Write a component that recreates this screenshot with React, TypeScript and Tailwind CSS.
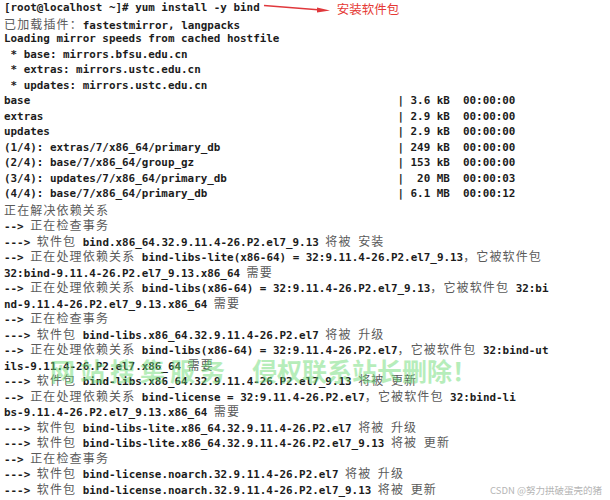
const lines: string[] = [
  "已加载插件：fastestmirror, langpacks",
  "Loading mirror speeds from cached hostfile",
  " * base: mirrors.bfsu.edu.cn",
  " * extras: mirrors.ustc.edu.cn",
  " * updates: mirrors.ustc.edu.cn",
  "base                                                        | 3.6 kB  00:00:00",
  "extras                                                      | 2.9 kB  00:00:00",
  "updates                                                     | 2.9 kB  00:00:00",
  "(1/4): extras/7/x86_64/primary_db                           | 249 kB  00:00:00",
  "(2/4): base/7/x86_64/group_gz                               | 153 kB  00:00:00",
  "(3/4): updates/7/x86_64/primary_db                          |  20 MB  00:00:03",
  "(4/4): base/7/x86_64/primary_db                             | 6.1 MB  00:00:12",
  "正在解决依赖关系",
  "--> 正在检查事务",
  "---> 软件包 bind.x86_64.32.9.11.4-26.P2.el7_9.13 将被 安装",
  "--> 正在处理依赖关系 bind-libs-lite(x86-64) = 32:9.11.4-26.P2.el7_9.13，它被软件包",
  "32:bind-9.11.4-26.P2.el7_9.13.x86_64 需要",
  "--> 正在处理依赖关系 bind-libs(x86-64) = 32:9.11.4-26.P2.el7_9.13，它被软件包 32:bi",
  "nd-9.11.4-26.P2.el7_9.13.x86_64 需要",
  "--> 正在检查事务",
  "---> 软件包 bind-libs.x86_64.32.9.11.4-26.P2.el7 将被 升级",
  "--> 正在处理依赖关系 bind-libs(x86-64) = 32:9.11.4-26.P2.el7，它被软件包 32:bind-ut",
  "ils-9.11.4-26.P2.el7.x86_64 需要",
  "---> 软件包 bind-libs.x86_64.32.9.11.4-26.P2.el7_9.13 将被 更新",
  "--> 正在处理依赖关系 bind-license = 32:9.11.4-26.P2.el7，它被软件包 32:bind-li",
  "bs-9.11.4-26.P2.el7_9.13.x86_64 需要",
  "---> 软件包 bind-libs-lite.x86_64.32.9.11.4-26.P2.el7 将被 升级",
  "---> 软件包 bind-libs-lite.x86_64.32.9.11.4-26.P2.el7_9.13 将被 更新",
  "--> 正在检查事务",
  "---> 软件包 bind-license.noarch.32.9.11.4-26.P2.el7 将被 升级",
  "---> 软件包 bind-license.noarch.32.9.11.4-26.P2.el7_9.13 将被 更新",
];

// split a line into latin / cjk runs so the cjk ones take two cells each
function Line({ text }: { text: string }) {
  const parts = text.split(/([\u3000-\u9fff\uff00-\uffef]+)/).filter(Boolean);
  return (
    <div className="h-[15.5px] whitespace-pre leading-[15.5px]">
      {parts.map((p, i) =>
        /[\u3000-\u9fff\uff00-\uffef]/.test(p) ? (
          <span
            key={i}
            className="text-[12px] font-normal tracking-[1.13px] text-[#5a5a5a] [font-family:'Noto_Sans_CJK_SC',sans-serif]"
          >
            {p}
          </span>
        ) : (
          <span key={i}>{p}</span>
        )
      )}
    </div>
  );
}

export default function App() {
  return (
    <div className="relative h-[500px] w-[610px] overflow-hidden bg-white">
      <div className="px-[4px] font-['DejaVu_Sans_Mono',monospace] text-[10.9px] font-semibold text-[#1c1c1c]">
        {/* command line + red annotation */}
        <div className="flex h-[15.5px] items-center whitespace-pre leading-[15.5px]">
          <span>[root@localhost ~]# yum install -y bind</span>
          <svg className="ml-[3px] mt-[2px] shrink-0" width="70" height="14" viewBox="0 0 70 14">
            <path d="M1 3.5 L58 8" stroke="#e0383c" strokeWidth="1.3" fill="none" />
            <polygon points="54,5.5 67,8.5 54,10.5" fill="#e0383c" />
          </svg>
          <span className="ml-[4px] mt-[2px] text-[12.5px] font-normal text-[#e53935] [font-family:'Noto_Sans_CJK_SC',sans-serif]">
            安装软件包
          </span>
        </div>
        {lines.map((l, i) => (
          <Line key={i} text={l} />
        ))}
      </div>

      {/* green watermark over the log */}
      <div className="pointer-events-none absolute left-[50px] top-[356px] flex gap-[22px] text-[25px] font-bold leading-[28px] text-[#6fdc78] opacity-50 [font-family:'Noto_Sans_CJK_SC',sans-serif]">
        <span className="tracking-[5px]">网站搜集服务</span>
        <span>侵权联系站长删除！</span>
      </div>

      <div className="absolute bottom-[4px] right-[8px] text-[9.5px] leading-[12px] text-[#b5b5b5] [font-family:'Noto_Sans_CJK_SC',sans-serif]">
        CSDN @努力拱破蛋壳的猪
      </div>
    </div>
  );
}
